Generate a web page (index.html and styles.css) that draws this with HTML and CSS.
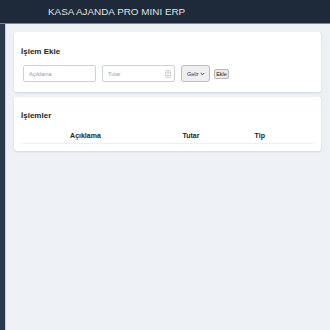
FILE: index.html
```html
<!DOCTYPE html>
<html lang="tr">

<head>
  <meta charset="UTF-8">
  <meta name="viewport" content="width=device-width, initial-scale=1.0">
  <title>Kasa Ajanda Pro Mini ERP</title>
  <link rel="stylesheet" href="styles.css">
</head>

<body>
<header class="topbar">
  <span class="brand">KASA AJANDA PRO MINI ERP</span>
</header>
<div class="layout">
  <aside class="sidebar"></aside>
  <main class="content">
    <section class="card card-form">
      <h2>İşlem Ekle</h2>
      <div class="form-row">
        <input type="text" id="desc" class="field" placeholder="Açıklama" />
        <div class="field field-number">
          <input type="text" id="amount" placeholder="Tutar" />
          <svg class="spin" width="6" height="8" viewBox="0 0 6 8">
            <rect x="0.5" y="0.5" width="5" height="7" rx="1" fill="#f3f3f3" stroke="#d4d4d4" />
            <path d="M1.8 3 L3 1.8 L4.2 3" fill="none" stroke="#999" stroke-width="0.6" />
            <path d="M1.8 5 L3 6.2 L4.2 5" fill="none" stroke="#999" stroke-width="0.6" />
          </svg>
        </div>
        <div class="select">
          <span>Gelir</span>
          <svg width="5" height="4" viewBox="0 0 5 4">
            <path d="M0.7 1 L2.5 2.8 L4.3 1" fill="none" stroke="#444" stroke-width="0.9" />
          </svg>
        </div>
        <button id="add" class="btn">Ekle</button>
      </div>
    </section>

    <section class="card card-list">
      <h2>İşlemler</h2>
      <table class="table">
        <thead>
          <tr>
            <th class="col-desc">Açıklama</th>
            <th class="col-amount">Tutar</th>
            <th class="col-type">Tip</th>
            <th class="col-action"></th>
          </tr>
        </thead>
        <tbody id="rows"></tbody>
      </table>
    </section>
  </main>
</div>
</body>

</html>
```

FILE: styles.css
```css
* {
  box-sizing: border-box;
}

body {
  margin: 0;
  min-height: 100vh;
  font-family: 'Liberation Sans', Arial, sans-serif;
  background: #edf1f6;
  color: #1f2328;
}

.topbar {
  height: 24px;
  padding-left: 48px;
  display: flex;
  align-items: center;
  background: #1e2a3a;
  border-bottom: 1px solid #7d8792;
}

.brand {
  font-size: 9.9px;
  color: #dfe3e8;
}

.layout {
  display: flex;
  min-height: calc(100vh - 24px);
}

.sidebar {
  width: 6px;
  background: #2a3a4c;
  border-right: 1px solid #c9d0d8;
}

.content {
  flex: 1;
  padding: 8px 9px 8px 8px;
}

.card {
  background: #fff;
  border-radius: 3px;
  box-shadow: 0 1px 2px rgba(30, 40, 60, 0.12);
  padding: 0 7px;
}

.card h2 {
  margin: 0;
  font-size: 8px;
  line-height: 10px;
  font-weight: bold;
  color: #1b1f24;
}

.card-form {
  height: 60px;
  padding-top: 15px;
}

.card-list {
  margin-top: 5px;
  height: 54px;
  padding-top: 14px;
}

.form-row {
  display: flex;
  align-items: center;
  gap: 6px;
  margin-top: 8px;
  padding-left: 2px;
}

.field {
  width: 73px;
  height: 17px;
  border: 1px solid #cfd3d8;
  border-radius: 2px;
  padding: 0 5px;
  font-family: inherit;
  font-size: 5.5px;
  background: #fff;
}

.field::placeholder,
.field-number input::placeholder {
  color: #9a9da1;
}

.field-number {
  display: flex;
  align-items: center;
  justify-content: space-between;
  padding-right: 3px;
}

.field-number input {
  width: 50px;
  border: none;
  outline: none;
  padding: 0;
  font-family: inherit;
  font-size: 5.5px;
  background: transparent;
}

.select {
  width: 29px;
  height: 17px;
  display: flex;
  align-items: center;
  justify-content: space-between;
  padding: 0 4px 0 5px;
  border: 1px solid #b9bdc3;
  border-radius: 3px;
  background: #efeff1;
  font-size: 5.5px;
  color: #333;
}

.btn {
  margin-left: -2px;
  width: 15px;
  height: 10px;
  padding: 0;
  border: 1px solid #b4b6ba;
  border-radius: 2px;
  background: #e9e9ed;
  font-family: inherit;
  font-size: 5.5px;
  color: #222;
}

.table {
  width: 100%;
  margin-top: 7px;
  border-collapse: collapse;
  table-layout: fixed;
}

.table th {
  height: 15px;
  padding: 0;
  font-size: 7px;
  font-weight: bold;
  color: #1b1f24;
  text-align: center;
  border-bottom: 1px solid #eceff3;
}

.col-desc {
  width: 44%;
}

.col-amount {
  width: 28%;
}

.col-type {
  width: 19%;
}
```
